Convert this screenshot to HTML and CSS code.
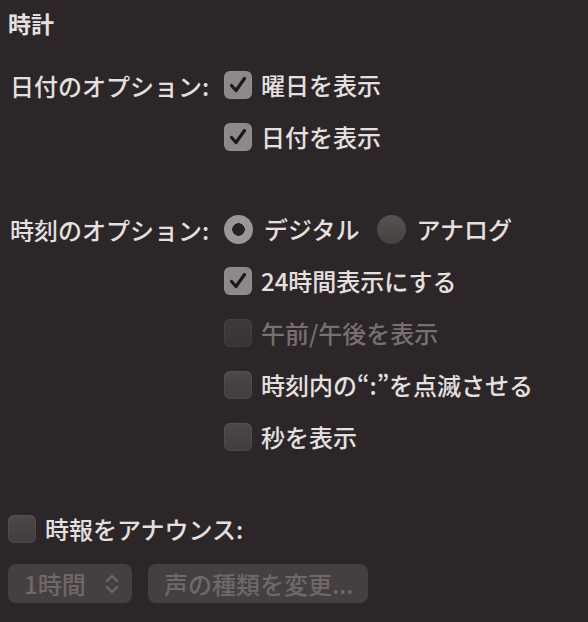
FILE: index.html
```html
<!DOCTYPE html>
<html lang="ja">
<head>
<meta charset="utf-8">
<link rel="stylesheet" href="styles.css">
</head>
<body>
<div class="page">
  <h1 class="title">時計</h1>

  <div class="group">
    <div class="label">日付のオプション:</div>
    <div class="controls">
      <div class="row"><span class="cb on"><svg viewBox="0 0 28 28"><path d="M7.5 14.5 L12 19.5 L20.5 7.5"/></svg></span><span class="text">曜日を表示</span></div>
      <div class="row"><span class="cb on"><svg viewBox="0 0 28 28"><path d="M7.5 14.5 L12 19.5 L20.5 7.5"/></svg></span><span class="text">日付を表示</span></div>
    </div>
  </div>

  <div class="group time">
    <div class="label">時刻のオプション:</div>
    <div class="controls">
      <div class="row">
        <span class="radio on"></span><span class="text">デジタル</span>
        <span class="radio off"></span><span class="text">アナログ</span>
      </div>
      <div class="row"><span class="cb on"><svg viewBox="0 0 28 28"><path d="M7.5 14.5 L12 19.5 L20.5 7.5"/></svg></span><span class="text">24時間表示にする</span></div>
      <div class="row disabled"><span class="cb dis"></span><span class="text">午前/午後を表示</span></div>
      <div class="row"><span class="cb"></span><span class="text">時刻内の“:”を点滅させる</span></div>
      <div class="row"><span class="cb"></span><span class="text">秒を表示</span></div>
    </div>
  </div>

  <div class="row announce"><span class="cb"></span><span class="text">時報をアナウンス:</span></div>

  <div class="buttons">
    <div class="btn popup"><span>1時間</span>
      <svg class="chev" viewBox="0 0 14 22"><path d="M2 8 L7 3 L12 8 M2 14 L7 19 L12 14"/></svg>
    </div>
    <div class="btn voice">声の種類を変更...</div>
  </div>
</div>
</body>
</html>
```

FILE: styles.css
```css
* { box-sizing: border-box; margin: 0; padding: 0; }
html, body { background: #2d2628; }
body {
  width: 588px;
  height: 622px;
  overflow: hidden;
  font-family: "Noto Sans CJK JP", "Noto Sans", sans-serif;
  color: #e4e0e0;
  font-size: 24px;
}
.page { padding: 8px 0 0 8px; }
.title {
  font-size: 23px;
  font-weight: 700;
  line-height: 30px;
  height: 30px;
  margin-bottom: 21px;
}
.group {
  display: grid;
  grid-template-columns: 216px auto;
}
.group.time { margin-top: 40px; }
.label {
  height: 52px;
  display: flex;
  align-items: center;
  padding-left: 2px;
  font-weight: 500;
}
.controls { display: flex; flex-direction: column; }
.row {
  height: 52px;
  display: flex;
  align-items: center;
  gap: 9px;
  font-weight: 500;
}
.text { line-height: 1; }
.cb {
  width: 28px;
  height: 28px;
  border-radius: 6px;
  flex: none;
  background: linear-gradient(#4d4748, #423c3d);
  box-shadow: inset 0 0 0 1px rgba(255,255,255,0.05);
  display: flex;
}
.cb.on { background: #8d8889; }
.cb.dis { background: linear-gradient(#3e3839, #393334); }
.cb svg { width: 28px; height: 28px; }
.cb svg path { fill: none; stroke: #1d191a; stroke-width: 3.2; stroke-linecap: round; stroke-linejoin: round; }
.disabled .text { color: #77706f; }
.radio {
  width: 29px;
  height: 29px;
  border-radius: 50%;
  flex: none;
}
.radio.on {
  background: radial-gradient(circle, #262223 0 6px, #9a9596 6.5px);
  margin-right: 2px;
}
.radio.off {
  background: linear-gradient(#57514f, #474142);
  margin-left: 8px;
  margin-right: 2px;
}
.announce { margin-top: 40px; }
.buttons { display: flex; gap: 16px; margin-top: 9px; }
.btn {
  height: 39px;
  border-radius: 8px;
  background: #463f40;
  color: #6f6869;
  font-weight: 500;
  font-size: 24px;
  display: flex;
  align-items: center;
}
.popup { width: 124px; padding-left: 16px; justify-content: space-between; padding-right: 13px; }
.chev { width: 14px; height: 22px; }
.chev path { fill: none; stroke: #6f6869; stroke-width: 2.4; stroke-linecap: round; stroke-linejoin: round; }
.voice { width: 220px; padding-left: 16px; }
```
